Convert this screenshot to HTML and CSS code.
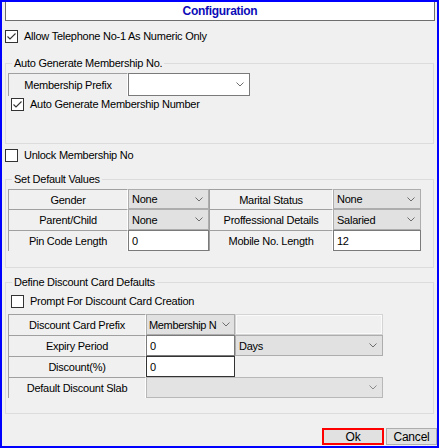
FILE: index.html
```html
<!DOCTYPE html>
<html>
<head>
<meta charset="utf-8">
<link rel="stylesheet" href="styles.css">
</head>
<body>
<div class="window">
  <div class="titlebar">Configuration</div>

  <div class="check top-check">
    <span class="box"><svg width="11" height="11" viewBox="0 0 11 11"><polyline points="1.5,5.5 4,8 9.5,2.5" fill="none" stroke="#333" stroke-width="1.1"/></svg></span>
    <span>Allow Telephone No-1 As Numeric Only</span>
  </div>

  <div class="group g1">
    <span class="legend">Auto Generate Membership No.</span>
    <div class="prefix-row">
      <div class="lbl prefix-lbl">Membership Prefix</div>
      <div class="combo white prefix-combo"><span class="val"></span><svg class="chev" width="8" height="5" viewBox="0 0 8 5"><polyline points="0.5,0.5 4,4 7.5,0.5" fill="none" stroke="#6d6d6d" stroke-width="1"/></svg></div>
    </div>
    <div class="check inner-check">
      <span class="box"><svg width="11" height="11" viewBox="0 0 11 11"><polyline points="1.5,5.5 4,8 9.5,2.5" fill="none" stroke="#333" stroke-width="1.1"/></svg></span>
      <span>Auto Generate Membership Number</span>
    </div>
  </div>

  <div class="check unlock">
    <span class="box"></span>
    <span>Unlock Membership No</span>
  </div>

  <div class="group g2">
    <span class="legend">Set Default Values</span>
    <div class="grid defaults">
      <div class="lbl">Gender</div>
      <div class="combo"><span class="val">None</span><svg class="chev" width="8" height="5" viewBox="0 0 8 5"><polyline points="0.5,0.5 4,4 7.5,0.5" fill="none" stroke="#6d6d6d" stroke-width="1"/></svg></div>
      <div class="lbl">Marital Status</div>
      <div class="combo"><span class="val">None</span><svg class="chev" width="8" height="5" viewBox="0 0 8 5"><polyline points="0.5,0.5 4,4 7.5,0.5" fill="none" stroke="#6d6d6d" stroke-width="1"/></svg></div>

      <div class="lbl">Parent/Child</div>
      <div class="combo"><span class="val">None</span><svg class="chev" width="8" height="5" viewBox="0 0 8 5"><polyline points="0.5,0.5 4,4 7.5,0.5" fill="none" stroke="#6d6d6d" stroke-width="1"/></svg></div>
      <div class="lbl">Proffessional Details</div>
      <div class="combo"><span class="val">Salaried</span><svg class="chev" width="8" height="5" viewBox="0 0 8 5"><polyline points="0.5,0.5 4,4 7.5,0.5" fill="none" stroke="#6d6d6d" stroke-width="1"/></svg></div>

      <div class="lbl">Pin Code Length</div>
      <div class="textbox">0</div>
      <div class="lbl">Mobile No. Length</div>
      <div class="textbox">12</div>
    </div>
  </div>

  <div class="group g3">
    <span class="legend">Define Discount Card Defaults</span>
    <div class="check inner-check prompt">
      <span class="box"></span>
      <span>Prompt For Discount Card Creation</span>
    </div>
    <div class="grid discount">
      <div class="lbl">Discount Card Prefix</div>
      <div class="combo tight"><span class="val">Membership N</span><svg class="chev" width="8" height="5" viewBox="0 0 8 5"><polyline points="0.5,0.5 4,4 7.5,0.5" fill="none" stroke="#6d6d6d" stroke-width="1"/></svg></div>
      <div class="textbox disabled"></div>

      <div class="lbl">Expiry Period</div>
      <div class="textbox">0</div>
      <div class="combo"><span class="val">Days</span><svg class="chev" width="8" height="5" viewBox="0 0 8 5"><polyline points="0.5,0.5 4,4 7.5,0.5" fill="none" stroke="#6d6d6d" stroke-width="1"/></svg></div>

      <div class="lbl">Discount(%)</div>
      <div class="textbox focused">0</div>
      <div class="empty"></div>

      <div class="lbl">Default Discount Slab</div>
      <div class="combo span2 dim"><span class="val"></span><svg class="chev" width="8" height="5" viewBox="0 0 8 5"><polyline points="0.5,0.5 4,4 7.5,0.5" fill="none" stroke="#8a8a8a" stroke-width="1"/></svg></div>
    </div>
  </div>

  <div class="buttons">
    <div class="btn ok">Ok</div>
    <div class="btn cancel">Cancel</div>
  </div>
</div>
</body>
</html>
```

FILE: styles.css
```css
* { box-sizing: border-box; }

html, body {
  margin: 0;
  padding: 0;
  background: #f0f0f0;
}

body {
  font-family: "Liberation Sans", Arial, sans-serif;
  font-size: 11px;
  letter-spacing: -0.25px;
  color: #000;
}

.window {
  width: 439px;
  height: 448px;
  border: 2px solid #0000ff;
  background: #f0f0f0;
  overflow: hidden;
}

.titlebar {
  margin-left: 3px;
  width: 430px;
  height: 19px;
  background: #fff;
  border: 1px solid #6d6d6d;
  border-top: none;
  text-align: center;
  font-weight: bold;
  font-size: 12px;
  letter-spacing: -0.3px;
  line-height: 18px;
  color: #0c0cb8;
}

.check {
  display: flex;
  align-items: center;
  height: 13px;
  line-height: 13px;
  gap: 6px;
  margin-left: 3px;
  white-space: nowrap;
}

.box {
  width: 13px;
  height: 13px;
  flex: none;
  border: 1px solid #333;
  background: #fff;
  display: flex;
  align-items: center;
  justify-content: center;
}

.box svg { display: block; }

.top-check { margin-top: 9px; }

.group {
  position: relative;
  margin-left: 3px;
  width: 429px;
  border: 1px solid #dcdcdc;
  padding-left: 2px;
}

.legend {
  position: absolute;
  top: -7px;
  left: 6px;
  padding: 0 2px;
  line-height: 13px;
  background: #f0f0f0;
  white-space: nowrap;
}

.g1 {
  margin-top: 20px;
  height: 81px;
  padding-top: 9px;
}

.prefix-row {
  display: flex;
  height: 23px;
}

.prefix-lbl { width: 120px; }
.prefix-combo { width: 122px; }

.inner-check {
  margin-top: 2px;
  margin-left: 3px;
}

.unlock {
  margin-top: 5px;
}

.g2 {
  margin-top: 17px;
  height: 89px;
  padding-top: 9px;
}

.g3 {
  margin-top: 14px;
  height: 132px;
  padding-top: 12px;
}

.prompt { margin-top: 0; }

.grid { display: grid; }

.defaults {
  grid-template-columns: 120px 81px 124px 88px;
  grid-template-rows: 20px 21px 21px;
  width: 413px;
}

.discount {
  margin-top: 6px;
  grid-template-columns: 138px 89px 148px;
  grid-template-rows: 21px 21px 21px 21px;
  width: 375px;
}

.lbl {
  background: #f0f0f0;
  border-top: 1px solid #a0a0a0;
  border-left: 1px solid #a0a0a0;
  border-right: 1px solid #fff;
  display: flex;
  align-items: center;
  justify-content: center;
  white-space: nowrap;
}

.combo {
  display: flex;
  align-items: center;
  background: #e1e1e1;
  border: 1px solid #adadad;
  padding-left: 3px;
  padding-right: 5px;
  overflow: hidden;
  white-space: nowrap;
}

.combo .val {
  flex: 1;
  overflow: hidden;
}

.combo .chev {
  flex: none;
  display: block;
  margin-left: 4px;
}

.combo.tight {
  padding-left: 2px;
  padding-right: 4px;
  letter-spacing: -0.35px;
}

.combo.tight .val {
  flex: none;
  overflow: visible;
  margin-right: auto;
}

.combo.tight .chev { margin-left: 1px; }

.combo.white {
  background: #fff;
  border-color: #7a7a7a;
}

.combo.span2 { grid-column: span 2; }

.combo.dim {
  background: #e3e3e3;
  border-color: #b8b8b8;
}

.textbox {
  background: #fff;
  border: 1px solid #7a7a7a;
  padding-left: 3px;
  display: flex;
  align-items: center;
  white-space: nowrap;
}

.textbox.focused { border-color: #333; }

.textbox.disabled {
  background: #f0f0f0;
  border: 1px solid #d4d4d4;
  box-shadow: inset 0 0 0 1px #fafafa;
}

.empty { background: #f0f0f0; }

.buttons {
  margin-top: 14px;
  display: flex;
  justify-content: flex-end;
  gap: 2px;
}

.btn {
  height: 17px;
  background: #e1e1e1;
  border: 1px solid #adadad;
  display: flex;
  align-items: center;
  justify-content: center;
  font-size: 12px;
  letter-spacing: -0.2px;
}

.btn.ok {
  width: 62px;
  border: 2px solid #ff0000;
}

.btn.cancel { width: 51px; }
```
